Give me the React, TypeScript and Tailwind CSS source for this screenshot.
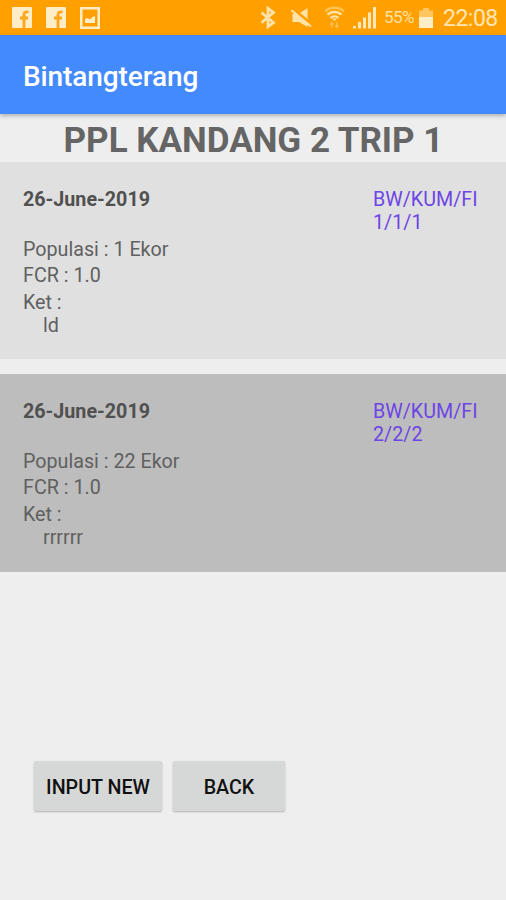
import React from 'react';

interface Trip {
  date: string;
  values: string;
  populasi: number;
  fcr: string;
  ket: string;
  color: string;
}

const trips: Trip[] = [
  { date: '26-June-2019', values: '1/1/1', populasi: 1, fcr: '1.0', ket: 'ld', color: 'bg-[#e0e0e0]' },
  { date: '26-June-2019', values: '2/2/2', populasi: 22, fcr: '1.0', ket: 'rrrrrr', color: 'bg-[#bdbdbd]' },
];

const FacebookIcon: React.FC = () => (
  <svg width="20" height="21" viewBox="0 0 20 21">
    <rect width="20" height="21" rx="1" fill="#ffedc8" />
    <path d="M12 21V8c0-2.300 1-3.400 4.500-3.200M8 11h8" fill="none" stroke="#ffa61a" strokeWidth="2.800" />
  </svg>
);

const PictureIcon: React.FC = () => (
  <svg width="20" height="22" viewBox="0 0 20 22" fill="none" stroke="#ffedc8">
    <rect x="1.250" y="1.250" width="17.500" height="19.500" strokeWidth="2.500" />
    <path d="M5 16v-4l2.500-1 2.500 1.500 2.500-2.500L15 9v7z" fill="#ffedc8" stroke="none" />
  </svg>
);

const BluetoothIcon: React.FC = () => (
  <svg width="16" height="23" viewBox="0 0 16 23" fill="none" stroke="#ffe3a8" strokeWidth="2.800">
    <path d="M1.500 6.500l12 10.200L8 20.700V2.300l5.500 4.200-12 10.200" />
  </svg>
);

const MuteIcon: React.FC = () => (
  <svg width="22" height="20" viewBox="0 0 22 20">
    <path d="M1.500 6h6L16.500 0v19L8 14H1.500z" fill="#ffe3a8" />
    <path d="M1 .500l20 16.500" stroke="#ffa000" strokeWidth="3.600" />
    <path d="M.500 2.300l19.500 16.200" stroke="#ffe3a8" strokeWidth="2.200" />
  </svg>
);

const WifiIcon: React.FC = () => (
  <svg width="21" height="23" viewBox="0 0 21 23" fill="none" stroke="#ffe3a8" strokeWidth="2.400">
    <path d="M1 5.500C6 .500 15 .500 20 5.500" opacity=".5" />
    <path d="M3.500 8.700c3.900-3.700 10.100-3.700 14 0" />
    <path d="M6.500 12c2.300-2.200 5.700-2.200 8 0" />
    <path d="M8 12.600h5l-2.500 2.500z" fill="#ffe3a8" stroke="none" />
    <path d="M7.800 22v-5.500M6 18.500l1.800-2 1.500 2M12.800 16v5.500M11 19.500l1.800 2 1.700-2" strokeWidth="1.300" opacity=".5" />
  </svg>
);

const SignalIcon: React.FC = () => (
  <svg width="23" height="22" viewBox="0 0 23 22" fill="#ffe8b8">
    <rect x="0" y="19" width="3" height="2.500" />
    <rect x="5" y="15" width="3" height="6.500" />
    <rect x="10" y="10.500" width="3" height="11" />
    <rect x="15" y="5.500" width="3" height="16" />
    <rect x="20" y="0" width="3" height="21.500" />
  </svg>
);

const BatteryIcon: React.FC = () => (
  <svg width="14" height="20" viewBox="0 0 14 20">
    <path d="M4 0h6v2.500h4V10H0V2.500h4z" fill="#ffc660" />
    <path d="M0 9h14v11H0z" fill="#ffedc8" />
  </svg>
);

const StatusBar: React.FC = () => (
  <div className="flex h-[35px] items-center bg-[#ffa000] pr-2 pl-3">
    <FacebookIcon />
    <div className="ml-[14px]"><FacebookIcon /></div>
    <div className="ml-[14px]"><PictureIcon /></div>
    <div className="ml-auto flex items-center">
      <BluetoothIcon />
      <div className="ml-[15px]"><MuteIcon /></div>
      <div className="ml-[11px]"><WifiIcon /></div>
      <div className="ml-2"><SignalIcon /></div>
      <span className="ml-2 w-[31px] text-[17px] leading-none tracking-[-0.6px] whitespace-nowrap text-[#ffe0a0]">55%</span>
      <div className="ml-[4px]"><BatteryIcon /></div>
      <span className="ml-[10px] w-[55px] pt-px text-[23px] leading-none tracking-[-0.5px] whitespace-nowrap text-[#ffe6b4]">22:08</span>
    </div>
  </div>
);

const TripCard: React.FC<{ trip: Trip }> = ({ trip }) => (
  <div className={`flex justify-between pt-[26px] pr-[23px] pl-[23px] text-[19.7px] leading-[23px] text-[#606060] first:h-[197px] last:h-[198px] ${trip.color}`}>
    <div>
      <p className="font-bold text-[#505050]">{trip.date}</p>
      <p className="mt-[27px]">Populasi : {trip.populasi} Ekor</p>
      <p className="mt-[3px]">FCR : {trip.fcr}</p>
      <p className="mt-1">Ket :</p>
      <p className="pl-5">{trip.ket}</p>
    </div>
    <div className="w-[110px] whitespace-nowrap text-[#6d45e6]">
      <p>BW/KUM/FI</p>
      <p>{trip.values}</p>
    </div>
  </div>
);

const App: React.FC = () => {
  return (
    <div className="flex h-[900px] w-[506px] flex-col overflow-hidden bg-[#eeeeee] font-['Roboto',sans-serif]">
      <StatusBar />
      <header className="relative flex h-[79px] items-center bg-[#448aff] pt-[5px] pl-[23px] shadow-[0_2px_4px_rgba(0,0,0,0.25)]">
        <h1 className="text-[28px] leading-none font-medium tracking-[-0.1px] text-white">Bintangterang</h1>
      </header>

      <h2 className="h-12 pl-px text-center text-[35px] leading-[53px] font-bold text-[#656565]">PPL KANDANG 2 TRIP 1</h2>

      <div className="flex flex-col gap-[15px]">
        {trips.map((trip, idx) => (
          <TripCard key={idx} trip={trip} />
        ))}
      </div>

      <div className="mt-[189px] flex gap-[11px] pl-[34px] text-[19.7px] font-medium text-[#111111]">
        <button className="h-[50px] w-[128px] rounded-[2px] bg-[#d6d8d7] pt-[3px] whitespace-nowrap shadow-[0_1px_2px_rgba(0,0,0,0.25)]">INPUT NEW</button>
        <button className="h-[50px] w-[112px] rounded-[2px] bg-[#d6d8d7] pt-[3px] shadow-[0_1px_2px_rgba(0,0,0,0.25)]">BACK</button>
      </div>
    </div>
  );
};

export default App;
